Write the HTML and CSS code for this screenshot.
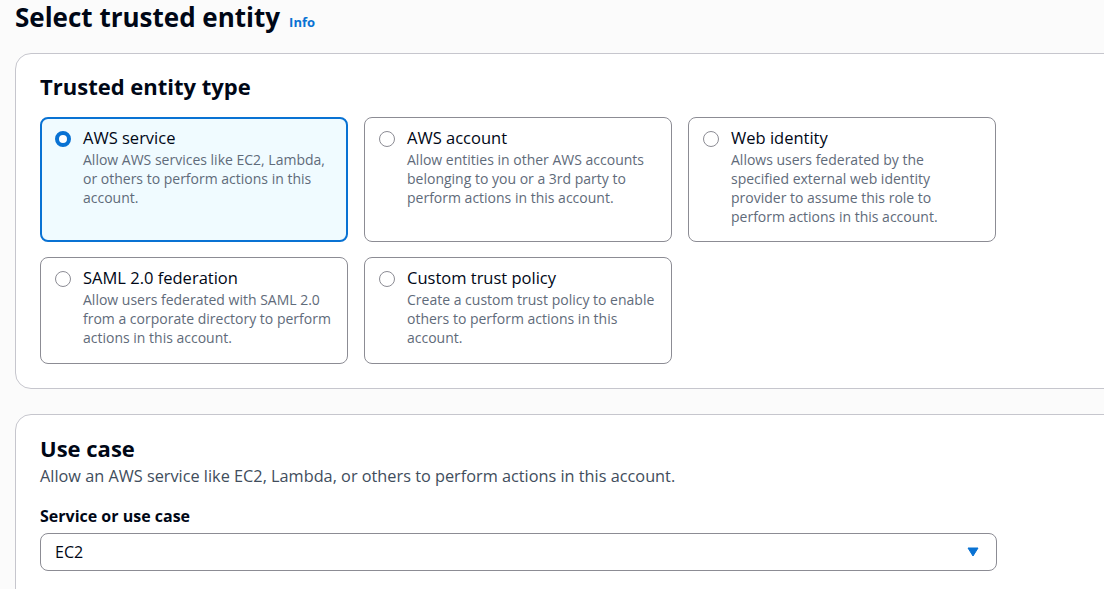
FILE: index.html
```html
<!DOCTYPE html>
<html>
<head>
<meta charset="utf-8">
<link rel="stylesheet" href="styles.css">
</head>
<body>
<div class="page">
  <div class="header">
    <h1 class="title">Select trusted entity</h1>
    <a class="info">Info</a>
  </div>

  <section class="container">
    <h2 class="section-title">Trusted entity type</h2>
    <div class="tiles">
      <div class="tile selected">
        <span class="radio checked"></span>
        <div class="tile-text">
          <div class="tile-title">AWS service</div>
          <div class="tile-desc">Allow AWS services like EC2, Lambda, or others to perform actions in this account.</div>
        </div>
      </div>
      <div class="tile">
        <span class="radio"></span>
        <div class="tile-text">
          <div class="tile-title">AWS account</div>
          <div class="tile-desc">Allow entities in other AWS accounts belonging to you or a 3rd party to perform actions in this account.</div>
        </div>
      </div>
      <div class="tile">
        <span class="radio"></span>
        <div class="tile-text">
          <div class="tile-title">Web identity</div>
          <div class="tile-desc">Allows users federated by the specified external web identity provider to assume this role to perform actions in this account.</div>
        </div>
      </div>
      <div class="tile">
        <span class="radio"></span>
        <div class="tile-text">
          <div class="tile-title">SAML 2.0 federation</div>
          <div class="tile-desc">Allow users federated with SAML 2.0 from a corporate directory to perform actions in this account.</div>
        </div>
      </div>
      <div class="tile">
        <span class="radio"></span>
        <div class="tile-text">
          <div class="tile-title">Custom trust policy</div>
          <div class="tile-desc">Create a custom trust policy to enable others to perform actions in this account.</div>
        </div>
      </div>
    </div>
  </section>

  <section class="container second">
    <h2 class="section-title">Use case</h2>
    <p class="section-desc">Allow an AWS service like EC2, Lambda, or others to perform actions in this account.</p>
    <div class="field-label">Service or use case</div>
    <div class="select">
      <span class="select-value">EC2</span>
      <svg class="caret" width="12" height="10" viewBox="0 0 12 10"><path d="M1 1 H11 L6 9 Z" fill="#0972d3" stroke="#0972d3" stroke-width="1" stroke-linejoin="round"/></svg>
    </div>
  </section>
</div>
</body>
</html>
```

FILE: styles.css
```css
html, body {
  margin: 0;
  padding: 0;
  background: #fbfbfb;
  overflow: hidden;
  width: 1104px;
  height: 589px;
}

.page {
  font-family: "Open Sans", "Liberation Sans", sans-serif;
  color: #000716;
  padding-left: 15px;
}

.header {
  display: flex;
  align-items: baseline;
  gap: 9px;
  padding-top: 2px;
  height: 30px;
}

.title {
  margin: 0;
  font-size: 26px;
  font-weight: 700;
  line-height: 30px;
  color: #000716;
}

.info {
  font-size: 13px;
  font-weight: 700;
  color: #0972d3;
}

.container {
  margin-top: 21px;
  width: 1120px;
  background: #ffffff;
  border: 1px solid #c6c6cd;
  border-radius: 16px;
  padding: 18px 24px 24px 24px;
  box-sizing: border-box;
}

.container.second {
  margin-top: 25px;
  padding-top: 19px;
  height: 200px;
}

.section-title {
  margin: 0;
  font-size: 22px;
  font-weight: 700;
  line-height: 28px;
  color: #000716;
}

.tiles {
  margin-top: 17px;
  display: grid;
  grid-template-columns: repeat(3, 308px);
  column-gap: 16px;
  row-gap: 15px;
}

.tile {
  display: flex;
  gap: 12px;
  border: 1px solid #8c8c94;
  border-radius: 8px;
  padding: 10px 14px 15px 14px;
  box-sizing: border-box;
  background: #fff;
  min-height: 107px;
}

.tile.selected {
  border: 2px solid #0972d3;
  background: #f0fbff;
  padding: 9px 13px 14px 13px;
}

.radio {
  flex: none;
  width: 16px;
  height: 16px;
  border-radius: 50%;
  border: 1px solid #8c8c94;
  box-sizing: border-box;
  margin-top: 3px;
  background: #fff;
}

.radio.checked {
  border: 4px solid #0972d3;
}

.tile-title {
  font-size: 16.5px;
  line-height: 20px;
  color: #000716;
}

.tile-desc {
  font-size: 14px;
  line-height: 19px;
  color: #5f6b7a;
  margin-top: 2px;
}

.section-desc {
  margin: 4px 0 0 0;
  font-size: 16.3px;
  line-height: 20px;
  color: #414d5c;
}

.field-label {
  margin-top: 20px;
  font-size: 16px;
  font-weight: 700;
  line-height: 20px;
}

.select {
  margin-top: 7px;
  width: 957px;
  height: 38px;
  box-sizing: border-box;
  border: 1px solid #8c8c94;
  border-radius: 8px;
  display: flex;
  align-items: center;
  justify-content: space-between;
  padding: 0 17px 0 14px;
}

.select-value {
  font-size: 16px;
  color: #000716;
}

.caret {
  display: block;
}
```
